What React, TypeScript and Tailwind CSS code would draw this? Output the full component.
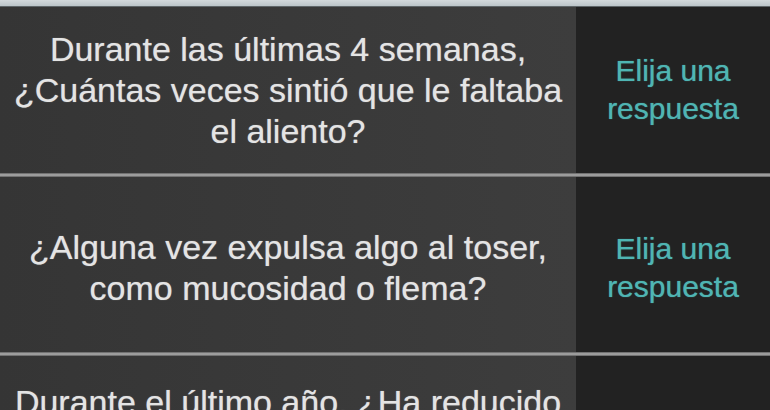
import React from "react";

const font = { fontFamily: '"Liberation Sans", Arial, sans-serif' };

function Divider() {
  return <div className="h-[4px] w-full bg-gradient-to-b from-[#5e5e5e] via-[#b2b2b2] to-[#5e5e5e]" />;
}

function Row({ lines, h, pt }: { lines: string[]; h: string; pt?: string }) {
  return (
    <div className={`flex w-full ${h}`}>
      <div className={`flex w-[576px] flex-col items-center justify-center bg-gradient-to-r from-[#353535] to-[#3d3d3d] text-[34px] leading-[41px] text-[#e4e4e4] [text-shadow:0_0_1px_rgba(228,228,228,0.6)] ${pt ?? ""}`}>
        {lines.map((l, i) => (
          <div key={i} className="whitespace-nowrap">
            {l}
          </div>
        ))}
      </div>
      <div className={`flex flex-1 flex-col items-center justify-center bg-[#222222] text-[30px] leading-[38px] text-[#4fb5b3] [text-shadow:0_0_1px_rgba(79,181,179,0.8)] ${pt ?? ""}`}>
        <div className="whitespace-nowrap">Elija una</div>
        <div className="whitespace-nowrap">respuesta</div>
      </div>
    </div>
  );
}

export default function App() {
  return (
    <div className="h-[410px] w-[770px] overflow-hidden bg-[#222222]" style={font}>
      <div className="h-[6px] w-full bg-gradient-to-b from-[#d3d9dc] to-[#bcc5c9]" />
      <div className="h-[1px] w-full bg-[#5f6669]" />
      <Row h="h-[166px]" lines={["Durante las últimas 4 semanas,", "¿Cuántas veces sintió que le faltaba", "el aliento?"]} />
      <Divider />
      <Row h="h-[175px]" pt="pt-[6px]" lines={["¿Alguna vez expulsa algo al toser,", "como mucosidad o flema?"]} />
      <Divider />
      <div className="flex h-[166px] w-full">
        <div className="flex w-[576px] flex-col items-center bg-gradient-to-r from-[#353535] to-[#3d3d3d] pt-[26px] text-[34px] leading-[41px] text-[#e4e4e4] [text-shadow:0_0_1px_rgba(228,228,228,0.6)]">
          <div className="whitespace-nowrap">Durante el último año, ¿Ha reducido</div>
          <div className="whitespace-nowrap">sus actividades por problemas</div>
          <div className="whitespace-nowrap">respiratorios?</div>
        </div>
        <div className="flex-1 bg-[#222222]" />
      </div>
    </div>
  );
}
